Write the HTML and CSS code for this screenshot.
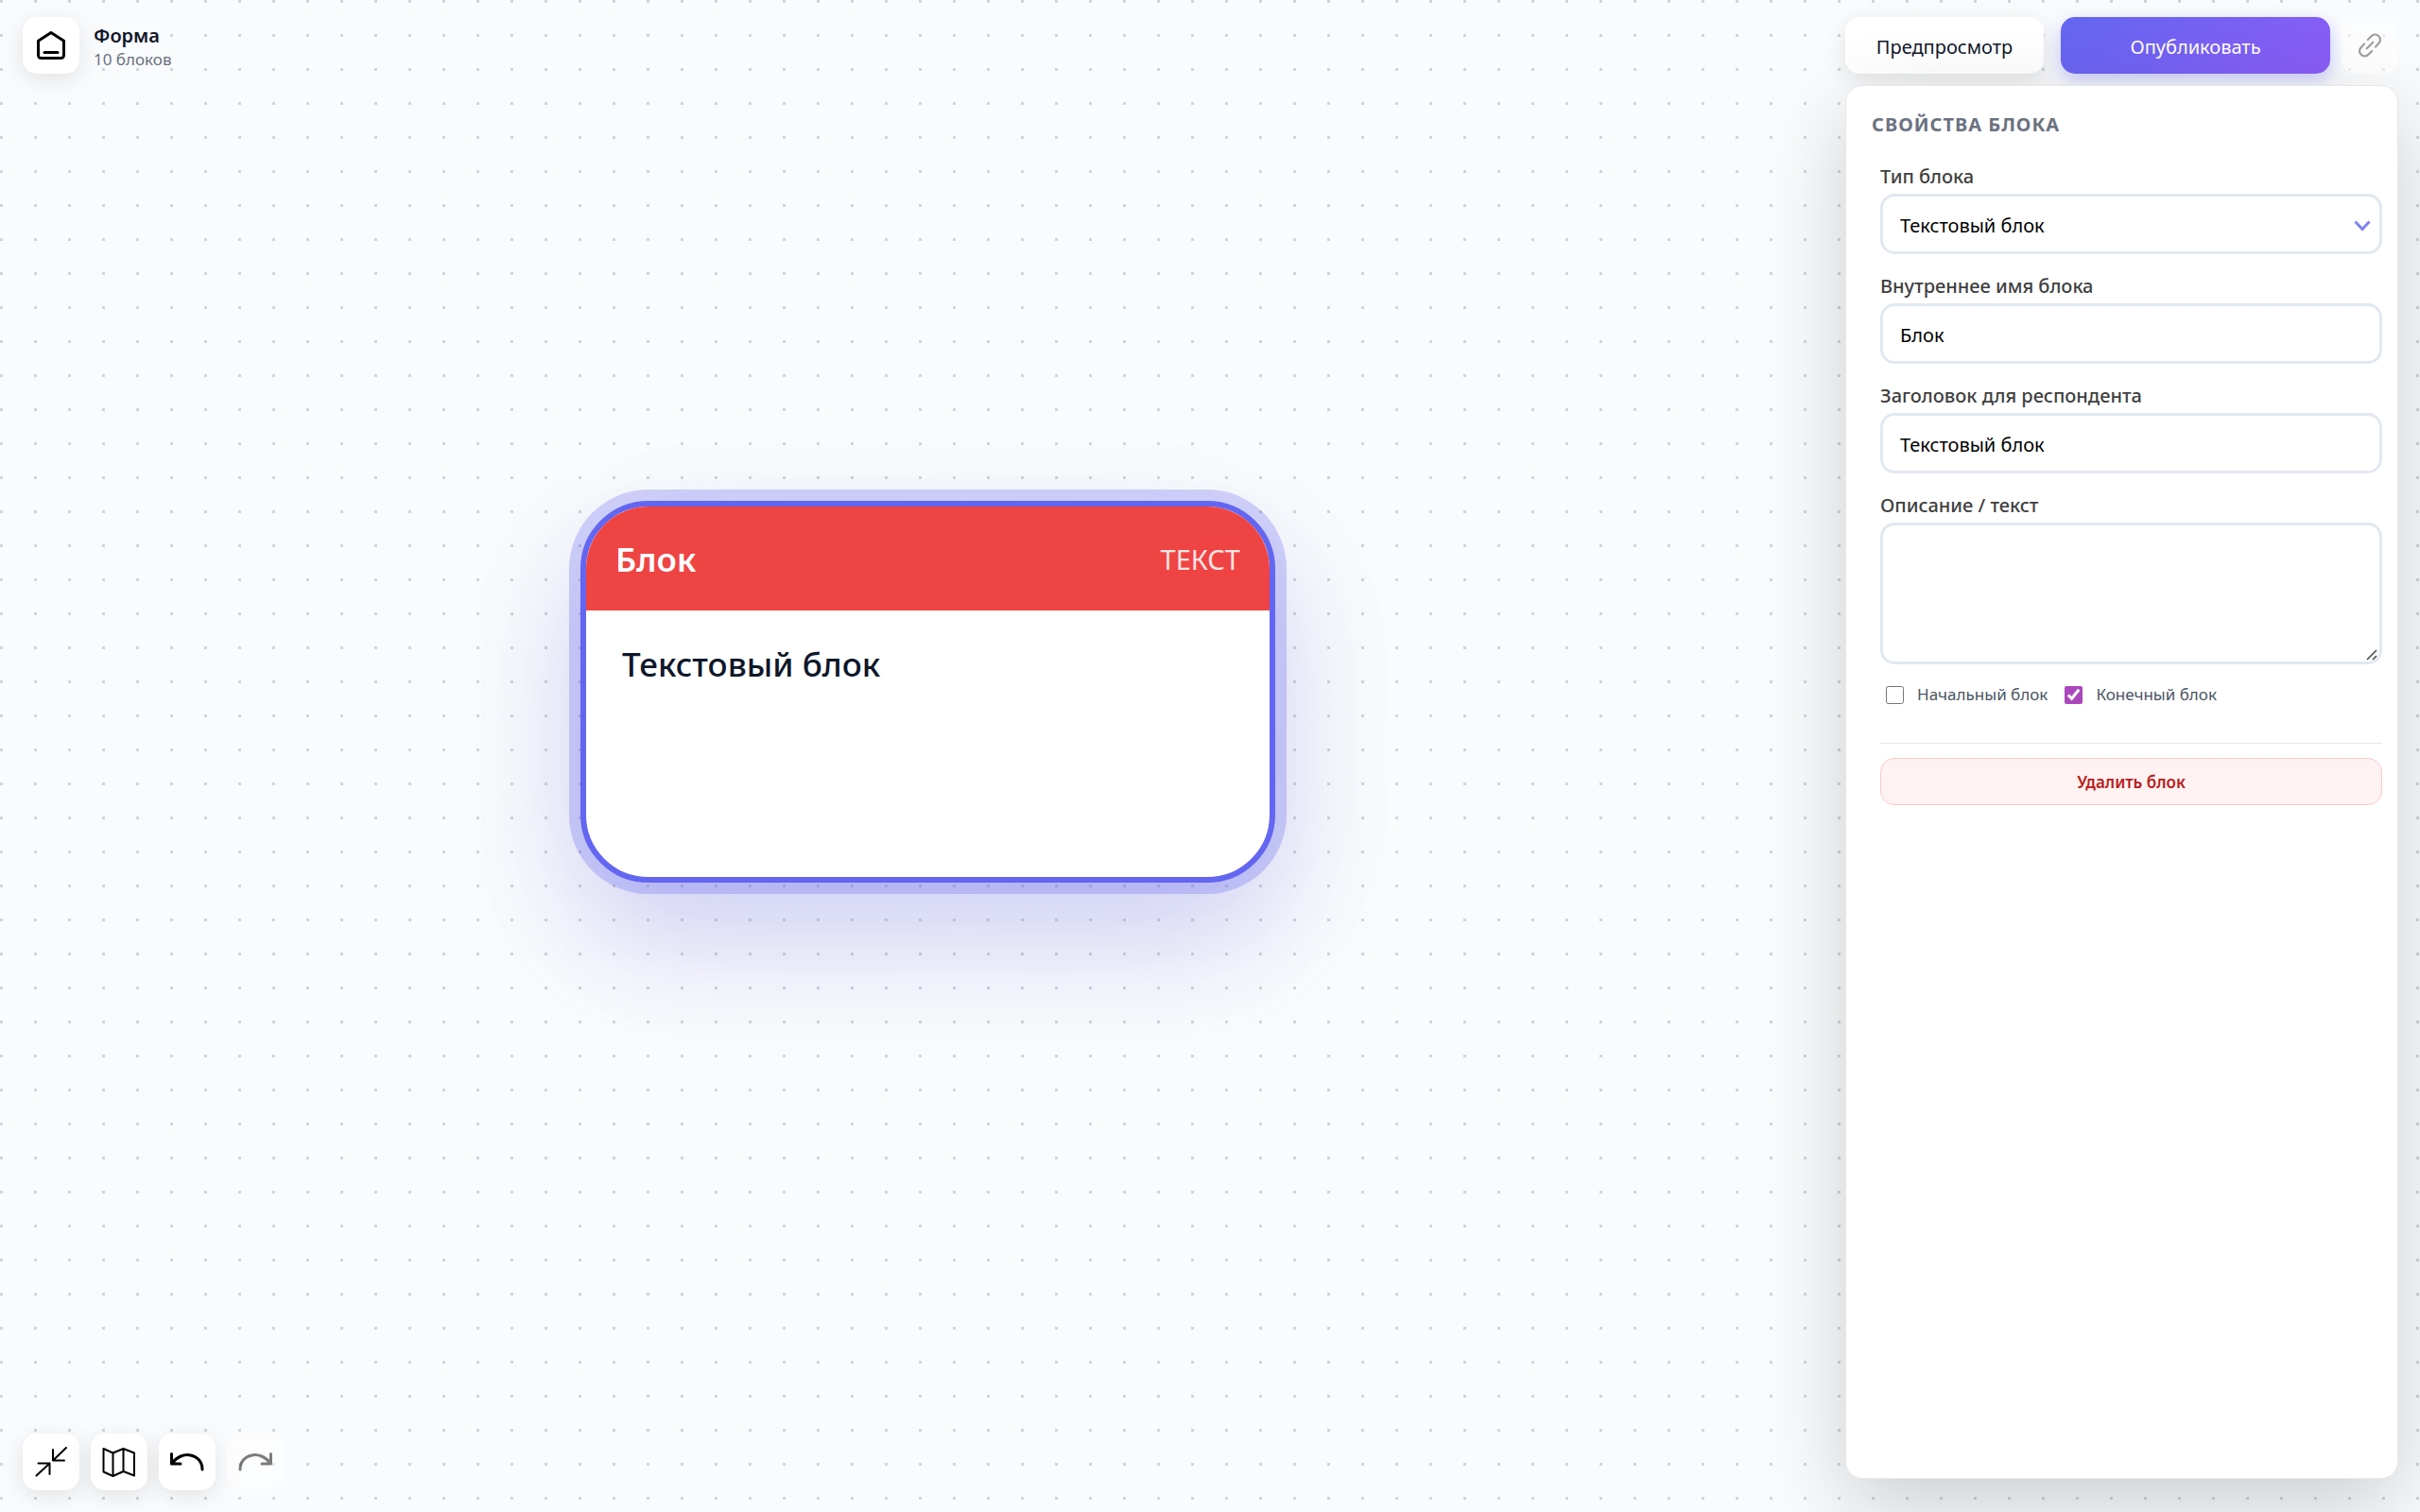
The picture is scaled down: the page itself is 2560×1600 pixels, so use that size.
FILE: index.html
```html
<!DOCTYPE html>
<html lang="ru">
<head>
    <meta charset="UTF-8">
    <meta name="viewport" content="width=device-width, initial-scale=1.0">
    <title>Форма</title>
    <link rel="stylesheet" href="styles.css">
</head>
<body>
    <main class="canvas">
        <article class="block selected">
            <header class="block-header">
                <span class="block-name">Блок</span>
                <span class="block-type">ТЕКСТ</span>
            </header>
            <div class="block-body">Текстовый блок</div>
        </article>
    </main>

    <div class="overlay">
        <div class="left-side">
            <header class="form-info">
                <button class="icon-btn" type="button" aria-label="На главную">
                    <svg width="32" height="32" viewBox="0 0 32 32" fill="none" stroke="currentColor" stroke-width="3" stroke-linecap="round" stroke-linejoin="round">
                        <path d="M2.500 11.200L16 2.500l13.500 8.700v15.300a3 3 0 0 1-3 3h-21a3 3 0 0 1-3-3z"/>
                        <path d="M9 23.500h14"/>
                    </svg>
                </button>
                <div class="form-meta">
                    <h1>Форма</h1>
                    <p>10 блоков</p>
                </div>
            </header>

            <nav class="toolbar">
                <button class="icon-btn" type="button" aria-label="Свернуть">
                    <svg width="36" height="36" viewBox="0 0 36 36" fill="none" stroke="currentColor" stroke-width="2" stroke-linecap="round" stroke-linejoin="round">
                        <path d="M34 3L20 16.500M20 5v11.500h12M2.500 32.500L16.500 19.500M4.500 19.500h12V31"/>
                    </svg>
                </button>
                <button class="icon-btn" type="button" aria-label="Карта">
                    <svg width="36" height="36" viewBox="0 0 36 36" fill="none" stroke="currentColor" stroke-width="2" stroke-linejoin="round">
                        <path d="M1.500 4l10 4.500L22.500 4 34 8.500v24L22.500 28l-11 5-10-4.500zM11.500 8.500V33M22.500 4v24"/>
                    </svg>
                </button>
                <button class="icon-btn" type="button" aria-label="Отменить">
                    <svg width="38" height="38" viewBox="0 0 38 38" fill="none" stroke="currentColor" stroke-width="3" stroke-linecap="round" stroke-linejoin="round">
                        <path d="M2.500 10.500v10.500h9.500M3 20.500C13 6 35 10 35 27"/>
                    </svg>
                </button>
                <button class="icon-btn" type="button" aria-label="Повторить" disabled>
                    <svg width="38" height="38" viewBox="0 0 38 38" fill="none" stroke="currentColor" stroke-width="3" stroke-linecap="round" stroke-linejoin="round">
                        <path d="M35.500 10.500v10.500h-9.500M35 20.500C25 6 3 10 3 27"/>
                    </svg>
                </button>
            </nav>
        </div>

        <div class="right-side">
            <div class="actions">
                <button class="preview-btn" type="button">Предпросмотр</button>
                <button class="publish-btn" type="button">Опубликовать</button>
                <button class="icon-btn link-btn" type="button" aria-label="Ссылка" disabled>
                    <svg width="26" height="26" viewBox="0 0 24 24" fill="none" stroke="currentColor" stroke-width="2" stroke-linecap="round" stroke-linejoin="round">
                        <path d="M15 9l-6 6"/>
                        <path d="M10 6.500l3.500-3.500a4.600 4.600 0 0 1 7 0 4.600 4.600 0 0 1 0 7L17.500 13.500"/>
                        <path d="M14 17.500L10.500 21a4.600 4.600 0 0 1-7 0 4.600 4.600 0 0 1 0-7L6.500 10.500"/>
                    </svg>
                </button>
            </div>

            <aside class="panel">
                <h2>Свойства блока</h2>
                <form class="panel-form">
                    <div class="field">
                        <label for="block-type">Тип блока</label>
                        <div class="select-wrap">
                            <select id="block-type">
                                <option>Текстовый блок</option>
                            </select>
                            <svg class="chevron" width="18" height="12" viewBox="0 0 18 12" fill="none" stroke="currentColor" stroke-width="3">
                                <path d="M1.500 1.500L9 9.500l7.500-8"/>
                            </svg>
                        </div>
                    </div>
                    <div class="field">
                        <label for="block-name">Внутреннее имя блока</label>
                        <input id="block-name" type="text" value="Блок">
                    </div>
                    <div class="field">
                        <label for="block-title">Заголовок для респондента</label>
                        <input id="block-title" type="text" value="Текстовый блок">
                    </div>
                    <div class="field">
                        <label for="block-text">Описание / текст</label>
                        <textarea id="block-text"></textarea>
                    </div>
                    <div class="checks">
                        <label><input type="checkbox"> Начальный блок</label>
                        <label><input type="checkbox" checked> Конечный блок</label>
                    </div>
                    <div class="danger-zone">
                        <button class="delete-btn" type="button">Удалить блок</button>
                    </div>
                </form>
            </aside>
        </div>
    </div>
</body>
</html>
```
FILE: styles.css
```css
* {
    box-sizing: border-box;
}
body {
    margin: 0;
    height: 100vh;
    overflow: hidden;
    font-family: 'Noto Sans', 'Open Sans', sans-serif;
    font-size: 20px;
    color: #0f172a;
}
button, input, select, textarea {
    font-family: inherit;
    font-size: 20px;
}
h1, h2, p {
    margin: 0;
}

/* Canvas */
.canvas {
    position: absolute;
    inset: 0;
    background-color: #fafbfd;
    background-image: conic-gradient(from 270deg at 3px 3px, #d2d4d8 90deg, transparent 0);
    background-size: 36px 36px;
}
.block {
    position: absolute;
    left: 614px;
    top: 530px;
    width: 735px;
    height: 404px;
    border: 6px solid #6366f1;
    border-radius: 72px;
    background-color: white;
    overflow: hidden;
}
.block.selected {
    box-shadow: 0 0 0 12px rgba(99, 102, 241, 0.28), 0 60px 120px rgba(99, 102, 241, 0.24), 0 45px 180px rgba(15, 23, 42, 0.05);
}
.block-header {
    display: flex;
    align-items: center;
    justify-content: space-between;
    height: 110px;
    padding: 0 31px;
    background-color: #ef4444;
    color: white;
}
.block-name {
    font-size: 35px;
    font-weight: 600;
}
.block-type {
    font-size: 29px;
    opacity: 0.85;
}
.block-body {
    padding: 33px 38px;
    font-size: 35px;
    font-weight: 500;
    line-height: 48px;
}

/* Interface over the canvas */
.overlay {
    position: absolute;
    inset: 0;
    display: flex;
    justify-content: space-between;
    padding: 18px 23px 35px 24px;
}
.left-side {
    display: flex;
    flex-direction: column;
    justify-content: space-between;
    margin-bottom: -12px;
}
.form-info {
    display: flex;
    align-items: center;
    gap: 15px;
}
.form-meta {
    padding-top: 3px;
}
.form-meta h1 {
    font-size: 20px;
    font-weight: 600;
    line-height: 26px;
}
.form-meta p {
    font-size: 17px;
    line-height: 24px;
    color: #6b7280;
}
.toolbar {
    display: flex;
    gap: 12px;
}
.icon-btn {
    display: flex;
    align-items: center;
    justify-content: center;
    width: 60px;
    height: 60px;
    padding: 0;
    border: none;
    border-radius: 15px;
    background-color: white;
    color: black;
    box-shadow: 0 6px 24px rgba(0, 0, 0, 0.1);
}
.icon-btn:disabled {
    opacity: 0.5;
    box-shadow: none;
}
.icon-btn.link-btn {
    color: #404040;
}

.right-side {
    display: flex;
    flex-direction: column;
    gap: 12px;
    width: 585px;
}
.actions {
    display: flex;
    gap: 12px;
}
.preview-btn, .publish-btn {
    height: 60px;
    padding: 2px 0 0;
    border: none;
    border-radius: 15px;
}
.preview-btn {
    width: 210px;
    margin-right: 6px;
    background-color: white;
    color: #0f172a;
    box-shadow: 0 6px 24px rgba(0, 0, 0, 0.1);
}
.publish-btn {
    flex: 1;
    background: linear-gradient(135deg, #6366f1, #8b5cf6);
    color: white;
    box-shadow: 0 6px 18px rgba(99, 102, 241, 0.35);
}

/* Block properties */
.panel {
    flex: 1;
    padding: 23px 16px 24px 27px;
    border: 1px solid #e5e7eb;
    border-radius: 18px;
    background-color: white;
    box-shadow: 0 30px 90px rgba(0, 0, 0, 0.18);
}
.panel h2 {
    font-size: 20px;
    font-weight: 700;
    line-height: 36px;
    letter-spacing: 1px;
    text-transform: uppercase;
    color: #6b7280;
}
.panel-form {
    display: flex;
    flex-direction: column;
    gap: 15px;
    padding: 18px 0 0 9px;
}
.field {
    display: flex;
    flex-direction: column;
}
.field label {
    line-height: 37px;
    font-weight: 500;
    color: #404040;
}
.field input, .field select, .field textarea {
    width: 100%;
    height: 64px;
    padding: 2px 18px 0;
    border: 3px solid #e2e8f0;
    border-radius: 15px;
    background-color: white;
    color: black;
}
.field textarea {
    display: block;
    height: 150px;
    padding: 15px 18px;
}
.field textarea::-webkit-resizer {
    background: url("data:image/svg+xml,%3Csvg xmlns='http://www.w3.org/2000/svg' viewBox='0 0 15 15'%3E%3Cpath d='M2 13L12 3M8 13l4-4' stroke='%23444' stroke-width='1.500'/%3E%3C/svg%3E") no-repeat center;
}
.field select {
    appearance: none;
}
.select-wrap {
    position: relative;
}
.chevron {
    position: absolute;
    right: 12px;
    top: 28px;
    color: #8183ee;
    pointer-events: none;
}
.checks {
    display: flex;
    gap: 18px;
    padding: 5px 6px 0;
}
.checks label {
    display: flex;
    align-items: center;
    gap: 14px;
    font-size: 17px;
    line-height: 24px;
    color: #4b5563;
}
.checks input {
    width: 19px;
    height: 19px;
    margin: 0;
    accent-color: #ab47bc;
}
.danger-zone {
    margin-top: 24px;
    padding-top: 15px;
    border-top: 1px solid #e5e7eb;
}
.delete-btn {
    width: 100%;
    height: 50px;
    border: 1px solid #fecaca;
    border-radius: 15px;
    background-color: #fef2f2;
    color: #b91c1c;
    font-size: 17px;
    font-weight: 600;
}
```
